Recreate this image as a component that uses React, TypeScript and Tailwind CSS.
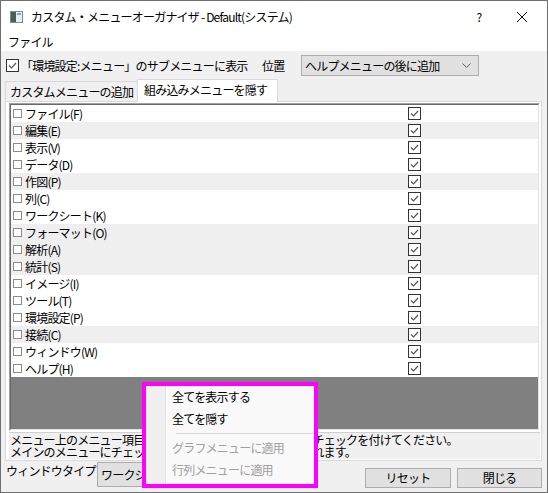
import React from "react";

/**
 * カスタム・メニューオーガナイザ dialog — hide built-in menus tab with a context menu open.
 */

const rows: { label: string; shade: boolean }[] = [
  { label: "ファイル(F)", shade: false },
  { label: "編集(E)", shade: true },
  { label: "表示(V)", shade: false },
  { label: "データ(D)", shade: false },
  { label: "作図(P)", shade: true },
  { label: "列(C)", shade: false },
  { label: "ワークシート(K)", shade: false },
  { label: "フォーマット(O)", shade: true },
  { label: "解析(A)", shade: true },
  { label: "統計(S)", shade: true },
  { label: "イメージ(I)", shade: false },
  { label: "ツール(T)", shade: false },
  { label: "環境設定(P)", shade: false },
  { label: "接続(C)", shade: true },
  { label: "ウィンドウ(W)", shade: false },
  { label: "ヘルプ(H)", shade: false },
];

function CheckBox() {
  return (
    <div className="w-[13px] h-[13px] border border-[#333333] bg-white flex items-center justify-center">
      <svg width="11" height="11" viewBox="0 0 11 11">
        <path d="M2 5.5 L4.5 8 L9 3" fill="none" stroke="#555555" strokeWidth="1.2" />
      </svg>
    </div>
  );
}

function Chevron() {
  return (
    <svg width="9" height="6" viewBox="0 0 9 6">
      <path d="M0.5 0.5 L4.5 4.5 L8.5 0.5" fill="none" stroke="#606060" strokeWidth="1" />
    </svg>
  );
}

export default function App() {
  return (
    <div className="relative w-[548px] h-[493px] overflow-hidden border border-[#707070] bg-[#f0f0f0] flex flex-col text-[12px] text-black tracking-[-0.8px] font-['Noto_Sans_CJK_JP','Liberation_Sans',sans-serif]">
      {/* Title bar */}
      <div className="h-[31px] bg-white flex items-center">
        <svg className="ml-[9px]" width="13" height="12" viewBox="0 0 13 12">
          <rect x="0.5" y="0.5" width="12" height="11" fill="#e8eef2" stroke="#8a8a8a" />
          <rect x="1" y="1" width="5" height="10" fill="#4f5d5a" />
          <rect x="7" y="2" width="4" height="2" fill="#7fa6c9" />
        </svg>
        <span className="ml-[8px] leading-[16px]">カスタム・メニューオーガナイザ - Default(システム)</span>
        <div className="ml-auto flex items-center pr-[19px]">
          <span className="w-[12px] text-center leading-[16px]">?</span>
          <svg className="ml-[31px]" width="12" height="12" viewBox="0 0 12 12">
            <path d="M1 1 L11 11 M11 1 L1 11" stroke="#111111" strokeWidth="1" />
          </svg>
        </div>
      </div>

      {/* Menu bar */}
      <div className="h-[19px] bg-white pl-[7px] leading-[19px]">ファイル</div>

      {/* Option row */}
      <div className="mt-[4px] h-[21px] flex items-center pl-[5px]">
        <div className="w-[256px] flex items-center">
          <CheckBox />
          <span className="ml-[2px] leading-[16px]">「環境設定:メニュー」のサブメニューに表示</span>
        </div>
        <span className="w-[39px] leading-[16px]">位置</span>
        <div className="w-[178px] h-[21px] border border-[#adadad] bg-[#e1e1e1] flex items-center pl-[3px] pr-[7px]">
          <span className="leading-[16px]">ヘルプメニューの後に追加</span>
          <div className="ml-auto">
            <Chevron />
          </div>
        </div>
      </div>

      {/* Tabs */}
      <div className="mt-[3px] h-[22px] flex items-end pl-[4px]">
        <div className="h-[20px] w-[133px] border border-b-0 border-[#d9d9d9] bg-[#f0f0f0] pl-[4px] leading-[19px]">
          カスタムメニューの追加
        </div>
        <div className="relative z-10 -ml-px mb-[-1px] h-[23px] w-[141px] border border-b-0 border-[#d9d9d9] bg-white pl-[6px] leading-[20px]">
          組み込みメニューを隠す
        </div>
      </div>

      {/* Tab panel */}
      <div className="ml-[4px] mr-[5px] h-[360px] border border-[#d9d9d9] bg-white pt-[1px] pl-[3px] pr-[1px] flex flex-col">
        <div className="h-[328px] border border-t-[#a0a0a0] border-l-[#a0a0a0] border-r-white border-b-white">
          <div className="h-full border border-t-[#696969] border-l-[#696969] border-r-[#e3e3e3] border-b-[#e3e3e3] flex flex-col">
            {rows.map((r) => (
              <div
                key={r.label}
                className={`h-[17px] flex items-center ${r.shade ? "bg-[#efefef]" : "bg-white"}`}
              >
                <div className="ml-[2px] w-[9px] h-[9px] border border-[#8c8c8c] bg-white" />
                <span className="ml-[3px] leading-[16px]">{r.label}</span>
                <div className="ml-auto mr-[117px]">
                  <CheckBox />
                </div>
              </div>
            ))}
            <div className="flex-1 bg-[#808080]" />
          </div>
        </div>
        <div className="mt-[1px] h-[27px] bg-[#f0f0f0] border-t border-[#d0d0d0] pl-[1px] pt-[1px] leading-[12px] overflow-hidden whitespace-nowrap">
          <div>メニュー上のメニュー項目を非表示にするには、非表示列にチェックを付けてください。</div>
          <div>メインのメニューにチェックを付けると下位メニューも隠されます。</div>
        </div>
      </div>

      {/* Bottom row */}
      <div className="flex items-start pl-[5px]">
        <span className="mt-[2px] w-[91px] leading-[16px]">ウィンドウタイプ</span>
        <div className="mt-[1px] w-[180px] h-[25px] border border-[#adadad] bg-[#e1e1e1] pl-[3px] leading-[23px]">
          ワークシート
        </div>
        <div className="ml-auto mr-[5px] mt-[7px] flex gap-[6px]">
          <button
            type="button"
            className="w-[86px] h-[20px] border border-[#adadad] bg-[#e1e1e1] leading-[18px] text-center"
          >
            リセット
          </button>
          <button
            type="button"
            className="w-[85px] h-[20px] border border-[#adadad] bg-[#e1e1e1] leading-[18px] text-center"
          >
            閉じる
          </button>
        </div>
      </div>

      {/* Context menu */}
      <div className="absolute left-[141px] top-[381px] z-20 w-[176px] h-[106px] border-4 border-[#ff00ff] bg-[#f9f9f9] flex">
        <div className="w-[20px] bg-[#f0f0f0] border-r border-[#e2e2e2]" />
        <div className="flex-1 flex flex-col border-l border-white">
          <div className="h-[22px] pl-[5px] leading-[22px]">全てを表示する</div>
          <div className="h-[22px] pl-[5px] leading-[22px]">全てを隠す</div>
          <div className="h-[7px] flex items-center pl-[9px]">
            <div className="w-full h-px bg-[#d7d7d7]" />
          </div>
          <div className="h-[22px] pl-[5px] leading-[22px] text-[#a0a0a0]">グラフメニューに適用</div>
          <div className="h-[22px] pl-[5px] leading-[22px] text-[#a0a0a0]">行列メニューに適用</div>
        </div>
      </div>
    </div>
  );
}
